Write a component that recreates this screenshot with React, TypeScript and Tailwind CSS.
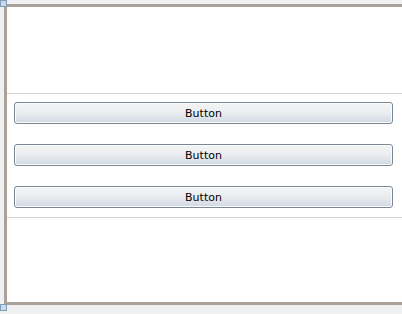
const buttons = ['Button', 'Button', 'Button'];

function Handle({ className }: { className: string }) {
  return <div className={`absolute w-[7px] h-[7px] border border-[#7f9db9] bg-[#c9d9ea] ${className}`} />;
}

export default function App() {
  return (
    <div className="relative w-[402px] h-[314px] bg-[#f0f0f0] overflow-hidden" style={{ fontFamily: '"DejaVu Sans", "Liberation Sans", sans-serif' }}>
      <div className="ml-[4px] mt-[4px] h-[301px] border-l-[3px] border-t-[3px] border-b-[3px] border-[#aaa299] bg-white">
        <div className="h-[86px]" />
        <div className="flex flex-col gap-[20px] border-y border-[#d4d4d4] pt-[8px] pb-[9px] pl-[7px] pr-[9px]">
          {buttons.map((label, i) => (
            <button
              key={i}
              className="h-[22px] w-full rounded-[3px] border border-[#7b8794] bg-gradient-to-b from-[#f4f4f4] via-[#eaedf0] to-[#d0d8e0] text-[11px] text-black leading-none shadow-[inset_0_0_0_1px_#fcfcfc]"
            >
              {label}
            </button>
          ))}
        </div>
      </div>
      <Handle className="left-0 top-0" />
      <Handle className="left-0 top-[304px]" />
    </div>
  );
}
